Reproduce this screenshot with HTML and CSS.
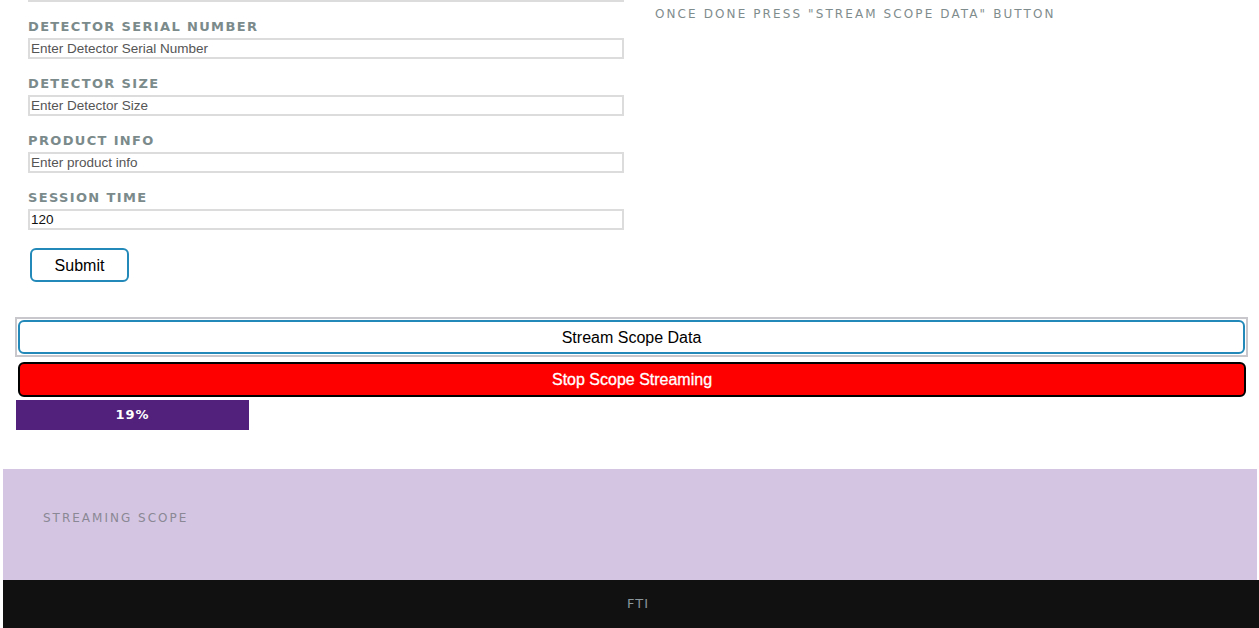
FILE: index.html
```html
<!DOCTYPE html>
<html>
<head>
<meta charset="utf-8">
<link rel="stylesheet" href="styles.css">
</head>
<body>
<div class="top">
  <form class="form">
    <div class="group">
      <input class="field" type="text" aria-label="Detector model">
    </div>
    <div class="group">
      <label class="label">DETECTOR SERIAL NUMBER</label>
      <input class="field" type="text" placeholder="Enter Detector Serial Number">
    </div>
    <div class="group">
      <label class="label">DETECTOR SIZE</label>
      <input class="field" type="text" placeholder="Enter Detector Size">
    </div>
    <div class="group">
      <label class="label">PRODUCT INFO</label>
      <input class="field" type="text" placeholder="Enter product info">
    </div>
    <div class="group">
      <label class="label">SESSION TIME</label>
      <input class="field" type="text" value="120">
    </div>
    <button class="submit" type="button">Submit</button>
  </form>
  <div class="side">
    <p class="note">ONCE DONE PRESS "STREAM SCOPE DATA" BUTTON</p>
  </div>
</div>

<div class="controls">
  <div class="ring">
    <button class="stream" type="button">Stream Scope Data</button>
  </div>
  <button class="stop" type="button">Stop Scope Streaming</button>
  <div class="progress">
    <div class="bar" style="width:19%">19%</div>
  </div>
</div>

<section class="scope">
  <h2 class="scope-title">STREAMING SCOPE</h2>
</section>

<footer class="footer">FTI</footer>
</body>
</html>
```

FILE: styles.css
```css
html, body {
  margin: 0;
  padding: 0;
  background: #ffffff;
  overflow: hidden;
}

body {
  font-family: "Liberation Sans", Arial, sans-serif;
}

.top {
  display: flex;
  gap: 31px;
  margin-top: -19px;
}

.form {
  width: 596px;
  padding-left: 28px;
  margin: 0;
}

.group {
  margin-bottom: 18px;
}

.label {
  display: block;
  font-family: "DejaVu Sans", Verdana, sans-serif;
  font-weight: bold;
  font-size: 13px;
  line-height: 13px;
  letter-spacing: 1.35px;
  color: #7b8a8b;
  margin-bottom: 5px;
}

.field {
  display: block;
  box-sizing: border-box;
  width: 596px;
  height: 21px;
  margin: 0;
  padding: 0 1px;
  border: 2px solid #dcdcdc;
  font-family: "Liberation Sans", Arial, sans-serif;
  font-size: 13.5px;
  color: #111;
  outline: none;
}

.field::placeholder {
  color: #555;
}

.submit {
  display: block;
  box-sizing: border-box;
  margin-left: 2px;
  width: 99px;
  height: 34px;
  background: #fff;
  border: 2px solid #2289b8;
  border-radius: 6px;
  font-family: "Liberation Sans", Arial, sans-serif;
  font-size: 16px;
  color: #000;
  padding: 2px 0 0;
}

.side {
  padding-top: 25px;
}

.note {
  margin: 0;
  font-family: "DejaVu Sans", Verdana, sans-serif;
  font-size: 12px;
  line-height: 16px;
  letter-spacing: 2.1px;
  color: #7f8c8d;
}

.controls {
  margin-top: 35px;
}

.ring {
  box-sizing: border-box;
  margin-left: 15px;
  width: 1233px;
  border: 2px solid #c8c8cc;
  padding: 1px;
}

.stream {
  display: block;
  box-sizing: border-box;
  width: 1227px;
  height: 34px;
  background: #fff;
  border: 2px solid #2289b8;
  border-radius: 6px;
  font-family: "Liberation Sans", Arial, sans-serif;
  font-size: 16px;
  color: #000;
  padding: 2px 0 0;
}

.stop {
  display: block;
  box-sizing: border-box;
  margin: 5px 0 0 18px;
  width: 1228px;
  height: 35px;
  background: #ff0000;
  border: 2px solid #000;
  border-radius: 6px;
  font-family: "Liberation Sans", Arial, sans-serif;
  font-size: 16px;
  color: #fff;
  padding: 0;
  -webkit-text-stroke: 0.3px #fff;
}

.progress {
  margin: 3px 0 0 16px;
  width: 1227px;
  height: 30px;
}

.bar {
  height: 30px;
  background: #51217c;
  color: #fff;
  font-family: "DejaVu Sans", Verdana, sans-serif;
  font-weight: bold;
  font-size: 13px;
  letter-spacing: 1px;
  line-height: 30px;
  text-align: center;
}

.scope {
  margin: 39px 2px 0 3px;
  height: 111px;
  background: #d4c5e2;
  box-sizing: border-box;
  padding: 41px 0 0 40px;
}

.scope-title {
  margin: 0;
  font-family: "DejaVu Sans", Verdana, sans-serif;
  font-weight: normal;
  font-size: 12px;
  line-height: 16px;
  letter-spacing: 2px;
  color: #8a8894;
}

.footer {
  margin-left: 3px;
  height: 48px;
  padding-left: 14px;
  background: #111111;
  color: #8a969c;
  font-family: "DejaVu Sans", Verdana, sans-serif;
  font-size: 13px;
  letter-spacing: 1px;
  line-height: 48px;
  text-align: center;
}
```
